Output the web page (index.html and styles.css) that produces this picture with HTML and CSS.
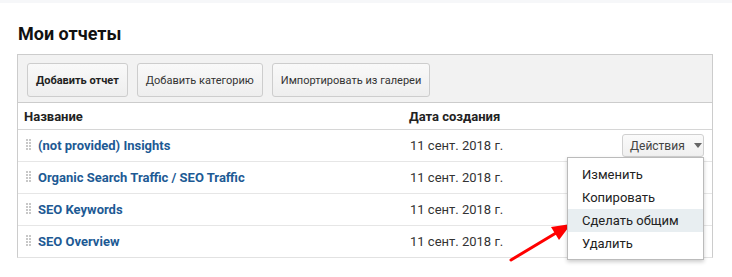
FILE: index.html
```html
<!DOCTYPE html>
<html lang="ru">
<head>
    <meta charset="UTF-8">
    <title>Мои отчеты</title>
    <link rel="stylesheet" href="styles.css">
</head>
<body>
    <div class="topbar"></div>

    <div class="page">
        <h1 class="title">Мои отчеты</h1>

        <div class="panel">
            <!-- Toolbar -->
            <div class="toolbar">
                <button class="tool-btn primary">Добавить отчет</button>
                <button class="tool-btn">Добавить категорию</button>
                <button class="tool-btn">Импортировать из галереи</button>
            </div>

            <div class="row head">
                <div class="cell">Название</div>
                <div class="cell">Дата создания</div>
                <div class="cell"></div>
            </div>

            <div class="row">
                <div class="cell name">
                    <svg class="grip" width="5" height="13" viewBox="0 0 5 13"><g fill="#c8c8c8"><rect x="0" y="0" width="2" height="2"/><rect x="3" y="0" width="2" height="2"/><rect x="0" y="3" width="2" height="2"/><rect x="3" y="3" width="2" height="2"/><rect x="0" y="6" width="2" height="2"/><rect x="3" y="6" width="2" height="2"/><rect x="0" y="9" width="2" height="2"/><rect x="3" y="9" width="2" height="2"/></g></svg>
                    <a href="#">(not provided) Insights</a>
                </div>
                <div class="cell date">11 сент. 2018 г.</div>
                <div class="cell actions">
                    <button class="action-btn">Действия <span class="caret"></span></button>
                    <ul class="menu">
                        <li>Изменить</li>
                        <li>Копировать</li>
                        <li class="active">Сделать общим</li>
                        <li>Удалить</li>
                    </ul>
                </div>
            </div>
            <div class="row">
                <div class="cell name">
                    <svg class="grip" width="5" height="13" viewBox="0 0 5 13"><g fill="#c8c8c8"><rect x="0" y="0" width="2" height="2"/><rect x="3" y="0" width="2" height="2"/><rect x="0" y="3" width="2" height="2"/><rect x="3" y="3" width="2" height="2"/><rect x="0" y="6" width="2" height="2"/><rect x="3" y="6" width="2" height="2"/><rect x="0" y="9" width="2" height="2"/><rect x="3" y="9" width="2" height="2"/></g></svg>
                    <a href="#">Organic Search Traffic / SEO Traffic</a>
                </div>
                <div class="cell date">11 сент. 2018 г.</div>
                <div class="cell"></div>
            </div>
            <div class="row">
                <div class="cell name">
                    <svg class="grip" width="5" height="13" viewBox="0 0 5 13"><g fill="#c8c8c8"><rect x="0" y="0" width="2" height="2"/><rect x="3" y="0" width="2" height="2"/><rect x="0" y="3" width="2" height="2"/><rect x="3" y="3" width="2" height="2"/><rect x="0" y="6" width="2" height="2"/><rect x="3" y="6" width="2" height="2"/><rect x="0" y="9" width="2" height="2"/><rect x="3" y="9" width="2" height="2"/></g></svg>
                    <a href="#">SEO Keywords</a>
                </div>
                <div class="cell date">11 сент. 2018 г.</div>
                <div class="cell"></div>
            </div>
            <div class="row">
                <div class="cell name">
                    <svg class="grip" width="5" height="13" viewBox="0 0 5 13"><g fill="#c8c8c8"><rect x="0" y="0" width="2" height="2"/><rect x="3" y="0" width="2" height="2"/><rect x="0" y="3" width="2" height="2"/><rect x="3" y="3" width="2" height="2"/><rect x="0" y="6" width="2" height="2"/><rect x="3" y="6" width="2" height="2"/><rect x="0" y="9" width="2" height="2"/><rect x="3" y="9" width="2" height="2"/></g></svg>
                    <a href="#">SEO Overview</a>
                </div>
                <div class="cell date">11 сент. 2018 г.</div>
                <div class="cell"></div>
            </div>
        </div>
    </div>

    <!-- annotation arrow -->
    <svg class="pointer" width="70" height="45" viewBox="0 0 70 45">
        <line x1="3" y1="42" x2="48" y2="15" stroke="#f00" stroke-width="3" stroke-linecap="round"/>
        <polygon points="63,6 43,9 51,22" fill="#f00"/>
    </svg>
</body>
</html>
```

FILE: styles.css
```css
body {
    margin: 0;
    font-family: Roboto, "Noto Sans", Arial, sans-serif;
    color: #222;
    background: #fff;
    position: relative;
    width: 732px;
    height: 277px;
    overflow: hidden;
}

.topbar {
    height: 3px;
    background-color: #f6f7f9;
}

.page {
    padding: 0 19px 0 17px;
}

.title {
    margin: 20px 0 10px 1px;
    font-size: 18px;
    line-height: 21px;
    font-weight: bold;
    color: #111;
}

.panel {
    width: 696px;
    box-sizing: border-box;
    border: 1px solid #ccc;
    border-bottom-color: #e2e2e2;
}

.toolbar {
    display: flex;
    gap: 9px;
    padding: 8px 9px 5px;
    background-color: #f2f2f2;
    border-bottom: 1px solid #ccc;
}

.tool-btn {
    height: 34px;
    padding: 0 8px;
    font-family: inherit;
    font-size: 11px;
    color: #333;
    background: linear-gradient(#f9f9f9, #eeeeee);
    border: 1px solid #cdcdcd;
    border-radius: 3px;
}

.tool-btn.primary {
    font-weight: bold;
    color: #222;
}

.row {
    display: grid;
    grid-template-columns: 385px 1fr auto;
    align-items: center;
    height: 31px;
    padding: 0 8px 0 6px;
    border-bottom: 1px solid #e6e6e6;
    font-size: 13px;
}

.row:last-child {
    border-bottom: none;
}

.row.head {
    height: 26px;
    font-weight: bold;
    border-bottom-color: #d6d6d6;
}

.name {
    display: flex;
    align-items: center;
}

.name a {
    color: #1d5a94;
    font-weight: bold;
    text-decoration: none;
}

.grip {
    margin: 0 7px 0 2px;
    flex-shrink: 0;
}

.date {
    padding-left: 1px;
    color: #333;
}

.actions {
    position: relative;
}

.action-btn {
    display: flex;
    align-items: center;
    height: 23px;
    width: 82px;
    padding: 0 0 0 7px;
    white-space: nowrap;
    font-family: inherit;
    font-size: 12px;
    color: #444;
    background: linear-gradient(#fafafa, #f0f0f0);
    border: 1px solid #d0d0d0;
    border-radius: 3px;
}

.caret {
    display: inline-block;
    margin-left: 9px;
    border-left: 4px solid transparent;
    border-right: 4px solid transparent;
    border-top: 5px solid #666;
}

.menu {
    position: absolute;
    top: 23px;
    right: 0;
    width: 137px;
    box-sizing: border-box;
    margin: 0;
    padding: 5px 0 4px;
    list-style: none;
    background: #fff;
    border: 1px solid #bbb;
    box-shadow: 0 2px 4px rgba(0, 0, 0, 0.2);
    z-index: 2;
}

.menu li {
    height: 23px;
    line-height: 23px;
    padding-left: 14px;
    font-size: 13px;
    color: #222;
}

.menu li.active {
    background-color: #e8eef1;
}

.pointer {
    position: absolute;
    left: 508px;
    top: 218px;
}
```
